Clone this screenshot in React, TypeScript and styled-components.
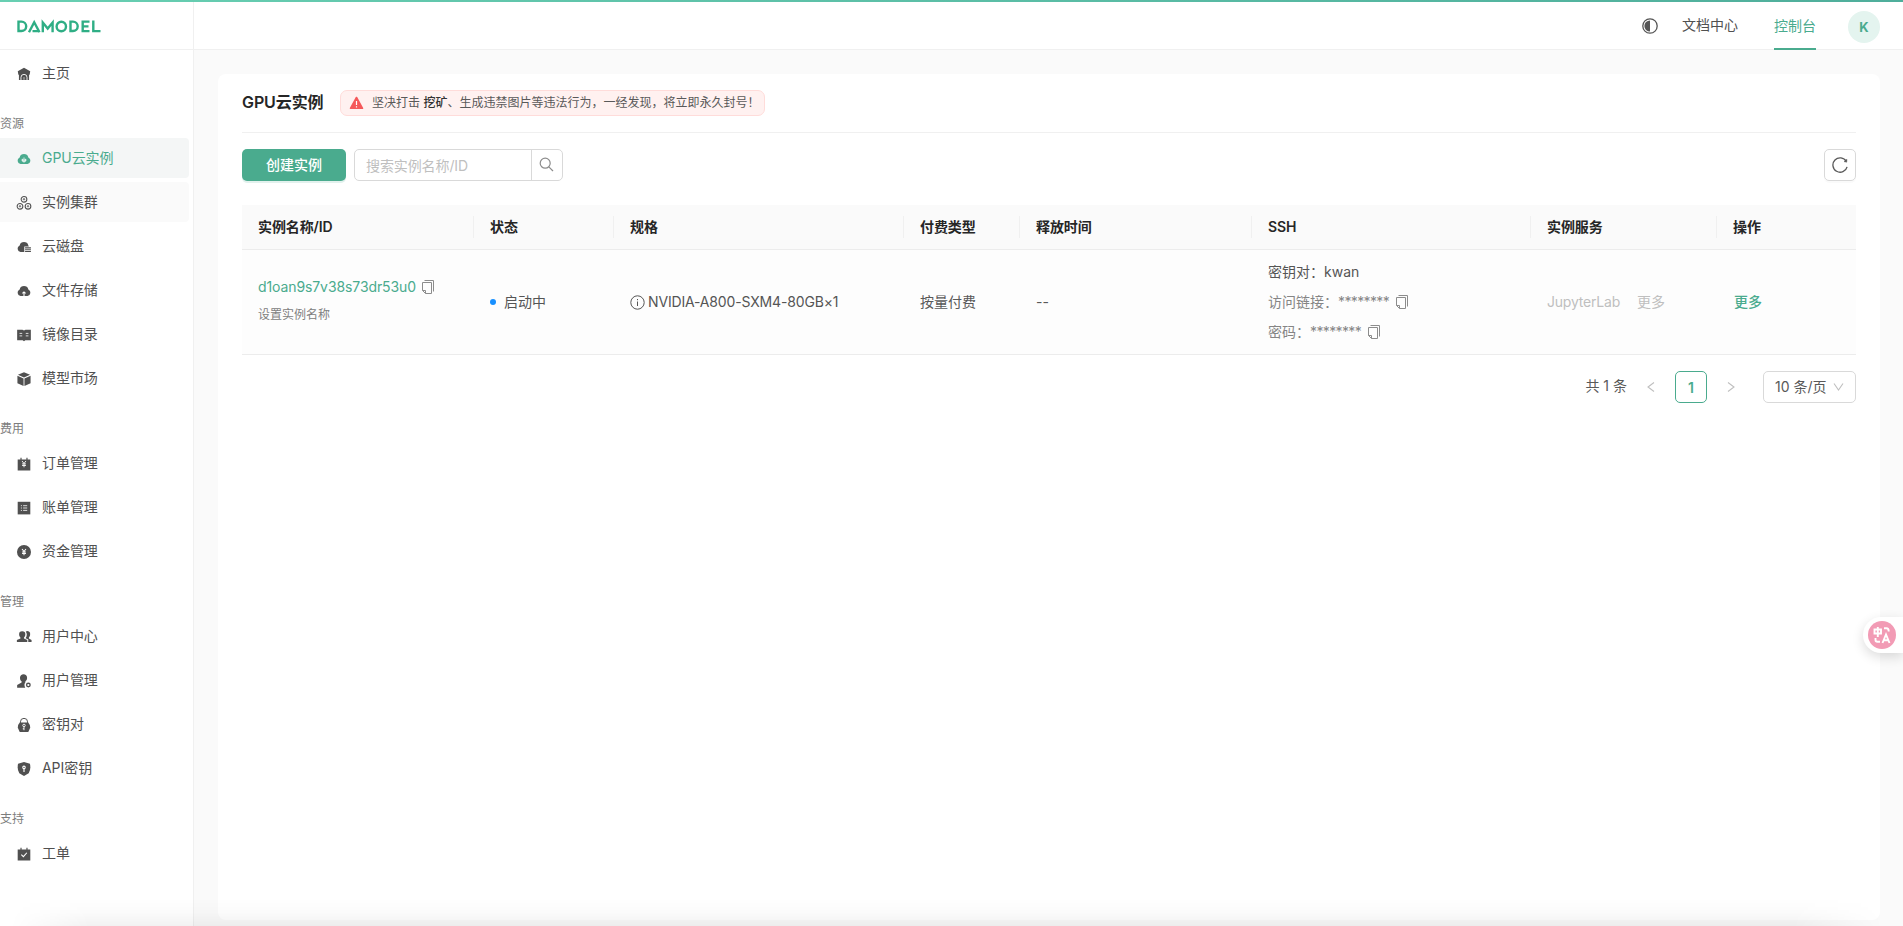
import React from "react";
import styled, { createGlobalStyle } from "styled-components";

const GREEN = "#4aab8e";
const LINE = "#f0f0f0";

const Global = createGlobalStyle`
  *, *::before, *::after { box-sizing: border-box; }
  body {
    margin: 0;
    overflow: hidden;
    background: #fafafa;
    color: #595959;
    font: 14px/22px Inter, "Noto Sans CJK SC", sans-serif;
  }
  svg { display: block; flex: none; }
`;

const Page = styled.div`
  position: relative;
  height: 926px;
  display: flex;
  flex-direction: column;
`;
const TopStrip = styled.div`
  height: 2px;
  flex: none;
  background: linear-gradient(90deg, #68cfb2, #4fae9b);
`;
const Body = styled.div`
  flex: 1;
  display: flex;
  min-height: 0;
`;
const Sidebar = styled.aside`
  width: 194px;
  flex: none;
  background: #fff;
  border-right: 1px solid ${LINE};
`;
const Brand = styled.div`
  height: 48px;
  padding: 17px 0 0 17px;
  border-bottom: 1px solid ${LINE};
`;
const Menu = styled.nav`
  padding-top: 3px;
`;
const Group = styled.div`
  display: flex;
  flex-direction: column;
  gap: 4px;
`;
const GroupLabel = styled.div`
  height: 41px;
  padding-top: 21px;
  font-size: 12px;
  line-height: 20px;
  color: #7d7d7d;
`;
const MenuItem = styled.a<{ $state?: "active" | "hover" }>`
  width: 189px;
  height: 40px;
  padding-left: 16px;
  display: flex;
  align-items: center;
  gap: 10px;
  border-radius: 0 4px 4px 0;
  color: ${(p) => (p.$state === "active" ? GREEN : "#505050")};
  background: ${(p) =>
    p.$state === "active" ? "#f4f6f6" : p.$state === "hover" ? "#fafafa" : "transparent"};
  svg { margin-top: 2px; color: ${(p) => (p.$state === "active" ? GREEN : "#505050")}; }
  span { margin-top: -1px; letter-spacing: -0.05px; }
`;
const Main = styled.div`
  flex: 1;
  display: flex;
  flex-direction: column;
`;
const Header = styled.header`
  height: 48px;
  flex: none;
  background: #fff;
  border-bottom: 1px solid ${LINE};
  display: flex;
  justify-content: flex-end;
  padding-right: 23px;
`;
const HeaderIcon = styled.div`
  margin: 16px 24px 0 0;
  color: #555;
`;
const HeaderLink = styled.a<{ $active?: boolean }>`
  height: 48px;
  padding-top: ${(p) => (p.$active ? "13px" : "12px")};
  margin-right: ${(p) => (p.$active ? "32px" : "36px")};
  color: ${(p) => (p.$active ? GREEN : "#505050")};
  border-bottom: 2px solid ${(p) => (p.$active ? GREEN : "transparent")};
`;
const Avatar = styled.div`
  width: 32px;
  height: 32px;
  margin-top: 9px;
  border-radius: 50%;
  background: #e4f4ef;
  color: ${GREEN};
  font-size: 13px;
  font-weight: 700;
  line-height: 32px;
  text-align: center;
`;
const Card = styled.main`
  flex: 1;
  margin: 24px 23px 6px 24px;
  padding: 0 24px;
  border-radius: 8px;
  background: #fff;
`;
const TitleRow = styled.div`
  height: 59px;
  display: flex;
  align-items: center;
  gap: 16px;
  padding-bottom: 1px;
  border-bottom: 1px solid ${LINE};
`;
const Title = styled.h1`
  margin: -2px 0 0;
  width: 82px;
  white-space: nowrap;
  font-size: 16px;
  line-height: 24px;
  font-weight: 600;
  letter-spacing: -0.1px;
  color: #262626;
`;
const Notice = styled.div`
  height: 26px;
  width: 425px;
  padding-left: 8px;
  display: flex;
  align-items: center;
  gap: 8px;
  border: 1px solid #ffdcda;
  border-radius: 7px;
  background: #fff1f0;
  font-size: 12px;
  white-space: nowrap;
  b { font-weight: 500; color: #333; }
`;
const Toolbar = styled.div`
  display: flex;
  margin: 16px 0 24px;
  gap: 8px;
`;
const Primary = styled.button`
  width: 104px;
  height: 32px;
  border: 0;
  padding: 0;
  border-radius: 5px;
  background: ${GREEN};
  box-shadow: 0 2px 0 rgba(74, 171, 142, 0.16);
  color: #fff;
  font: inherit;
  font-weight: 500;
`;
const Search = styled.div`
  width: 209px;
  height: 32px;
  display: flex;
  border: 1px solid #d9d9d9;
  border-radius: 5px;
  color: #bfbfbf;
`;
const SearchField = styled.div`
  flex: 1;
  padding: 5px 11px;
  line-height: 22px;
  letter-spacing: -0.1px;
`;
const SearchButton = styled.div`
  width: 31px;
  padding: 0 2px 1px 0;
  display: flex;
  align-items: center;
  justify-content: center;
  border-left: 1px solid #d9d9d9;
  color: #8c8c8c;
`;
const Refresh = styled.div`
  width: 32px;
  height: 32px;
  margin-left: auto;
  display: flex;
  align-items: center;
  justify-content: center;
  border: 1px solid #d9d9d9;
  border-radius: 5px;
  box-shadow: 0 2px 0 rgba(0, 0, 0, 0.02);
`;
const Columns = styled.div`
  display: grid;
  grid-template-columns: 232px 140px 290px 116px 232px 279px 186px 139px;
  align-items: center;
  border-bottom: 1px solid #ececec;
`;
const HeadRow = styled(Columns)`
  height: 45px;
  background: #fafafa;
  font-weight: 600;
  letter-spacing: -0.1px;
  color: #262626;
`;
const HeadCell = styled.div`
  height: 22px;
  padding-left: 16px;
  border-right: 1px solid ${LINE};
  &:last-child { border-right: 0; }
`;
const DataRow = styled(Columns)`
  height: 105px;
  background: #fdfdfd;
`;
const Cell = styled.div`
  padding-left: 16px;
  white-space: nowrap;
`;
const Inline = styled.div<{ $gap?: number; $muted?: boolean }>`
  display: flex;
  align-items: center;
  gap: ${(p) => p.$gap ?? 6}px;
  color: ${(p) => (p.$muted ? "#858585" : "#555")};
`;
const InstanceId = styled.a`
  color: ${GREEN};
  letter-spacing: -0.1px;
`;
const Spec = styled.span`
  letter-spacing: -0.16px;
`;
const Mask = styled.span`
  letter-spacing: -0.62px;
`;
const Rename = styled.div`
  margin: 6px 0 3px;
  font-size: 12px;
  color: #808080;
`;
const Dot = styled.i`
  width: 6px;
  height: 6px;
  border-radius: 50%;
  background: #1890ff;
`;
const SshList = styled.div`
  display: flex;
  flex-direction: column;
  gap: 8px;
`;
const Disabled = styled.span`
  color: #bfbfbf;
  letter-spacing: -0.2px;
`;
const MoreLink = styled.a`
  color: ${GREEN};
  font-weight: 500;
  padding-left: 1px;
`;
const Pager = styled.div`
  margin-top: 16px;
  height: 32px;
  display: flex;
  justify-content: flex-end;
  align-items: center;
  color: #595959;
`;
const Total = styled.span`
  margin: -2px 8px 0 0;
`;
const PageArrow = styled.span`
  width: 32px;
  display: flex;
  justify-content: center;
  color: #bfbfbf;
`;
const PageNumber = styled.span`
  width: 32px;
  height: 32px;
  margin: 0 8px;
  border: 1px solid ${GREEN};
  border-radius: 5px;
  color: ${GREEN};
  font-weight: 600;
  line-height: 31px;
  text-align: center;
`;
const SizeSelect = styled.div`
  width: 93px;
  height: 32px;
  margin-left: 16px;
  padding: 0 11px;
  display: flex;
  align-items: center;
  justify-content: space-between;
  border: 1px solid #d9d9d9;
  border-radius: 5px;
  white-space: nowrap;
  svg { color: #bfbfbf; }
`;
const Translate = styled.div`
  position: absolute;
  right: 0;
  top: 617px;
  width: 40px;
  height: 36px;
  padding: 4px 0 0 5px;
  border-radius: 18px 0 0 18px;
  background: #fff;
  box-shadow: 0 4px 12px rgba(0, 0, 0, 0.14);
`;
const BottomShade = styled.div`
  position: absolute;
  left: 0;
  right: 0;
  bottom: 0;
  height: 28px;
  background: linear-gradient(rgba(0, 0, 0, 0), rgba(0, 0, 0, 0.015) 50%, rgba(0, 0, 0, 0.05));
  mask-image: linear-gradient(90deg, transparent 10px, #000 90px, #000 calc(100% - 110px), transparent calc(100% - 20px));
`;

const stroke = { fill: "none", stroke: "currentColor" } as const;
const cut = { fill: "none", stroke: "#fff" } as const;
const CLOUD = "M4 13.6A3.9 3.9 0 0 1 3.1 6.2 5.1 5.1 0 0 1 12.9 6.2 3.9 3.9 0 0 1 12 13.6Z";
const YEN = "M5.8 4.6 8 7.4 10.200 4.600M8 7.400V11.700M5.800 7.900H10.200M5.800 9.700H10.200";

const glyphs: Record<string, React.ReactNode> = {
  home: (
    <>
      <path d="M8 .9 15 5 14.400 8.700 13.700 9V14.800H2.300V9L1.600 8.700 1 5Z" />
      <path {...cut} strokeWidth="1" d="M4.600 15V11.800a3.400 3.400 0 0 1 6.800 0V15" />
      <path {...cut} strokeWidth=".7" d="M8 11.500v3" />
    </>
  ),
  gpu: (
    <>
      <path d={CLOUD} />
      <path {...cut} strokeWidth=".9" d="M8 6.300v5.800M6.200 7.800v2.800h3.600V7.800M5.200 9.200h5.600" />
    </>
  ),
  cluster: (
    <g {...stroke} strokeWidth="1.200">
      <circle cx="8" cy="3.800" r="3.200" /><circle cx="3.500" cy="11.700" r="3.200" /><circle cx="12.500" cy="11.700" r="3.200" />
      <g strokeWidth="1"><circle cx="8" cy="3.800" r=".8" /><circle cx="3.500" cy="11.700" r=".8" /><circle cx="12.500" cy="11.700" r=".8" /></g>
    </g>
  ),
  disk: (
    <>
      <path d="M8.300 13.600H4A3.900 3.900 0 0 1 3.100 6.200 5.100 5.100 0 0 1 12.900 6.200L13.500 7.400H8.300Z" />
      <path d="M9.200 8.400H15.800V9.700H9.200ZM9.200 10.500H15.800V11.700H9.200ZM9.200 12.500H15.800V13.700H9.200Z" />
    </>
  ),
  file: (
    <>
      <path d={CLOUD} />
      <path {...cut} strokeWidth="1.200" d="M8 13.600V9.200M6.200 10.800 8 9 9.800 10.800" />
    </>
  ),
  book: (
    <>
      <path d="M.3 2.200H6Q7.500 2.200 8 3.200 8.500 2.200 10 2.200h5.700v11.700H9.500L8 14.900 6.500 13.900H.3Z" />
      <path {...cut} strokeWidth=".9" d="M3 6.200h3M3 9h3M10 6.200h3M10 9h3" />
    </>
  ),
  cube: (
    <>
      <path d="M8 .3 14.800 3.300 8 6.300 1.200 3.300Z" />
      <path d="M.6 4.400 7.500 7.500V15.900L.6 12.700ZM15.400 4.400 8.500 7.500V15.900L15.400 12.700Z" />
    </>
  ),
  order: (
    <>
      <path d="M.9 2.800H4V1H5.300V2.800H10.700V1H12V2.800h3.100v12.500H.9Z" />
      <path {...cut} strokeWidth="1" d={YEN} />
    </>
  ),
  bill: (
    <>
      <path d="M.9 1H15.100V15.200H.9Z" />
      <path {...cut} strokeWidth=".9" d="M4.500 5.400h1.200M7 5.400h4.600M4.500 8h1.200M7 8h4.600M4.500 10.700h1.200M7 10.700h4.600" />
    </>
  ),
  money: (
    <>
      <circle cx="8" cy="8" r="7.900" />
      <path {...cut} strokeWidth="1.200" d={YEN} />
    </>
  ),
  users: (
    <>
      <path d="M6 1.600a3.500 3.500 0 0 1 3.500 3.700c0 1.700-.8 2.700-1.500 3.400v1.100l3.700 1.700v2H0v-2L4 9.800V8.700C3.300 8 2.500 7 2.500 5.300A3.500 3.500 0 0 1 6 1.600Z" />
      <path d="M10 1.900a3.200 3.200 0 0 1 4.900 3.400c0 1.700-.8 2.600-1.400 3.200v1.200l3 1.700V13.500h-3.700v-2.600L9.800 9.400c1.800-2.400 1.800-5 .2-7.500Z" />
    </>
  ),
  user: (
    <>
      <path d="M7.500.3a4 4 0 0 1 4 4.200c0 2-1 3-1.900 3.900v1c-1.400 1.500-1.400 3.900-.2 6.100H.3v-2.900L5.300 9.600V8.400C4.500 7.600 3.500 6.500 3.500 4.500A4 4 0 0 1 7.500.3Z" />
      <circle {...stroke} cx="12.900" cy="12.500" r="2" strokeWidth="1.500" />
    </>
  ),
  lock: (
    <>
      <path {...stroke} strokeWidth="1.100" d="M4 6V4.500a4 4 0 0 1 8 0V6" />
      <path d="M3.200 5.200H12.800Q15.300 8 15 11L12.800 15.900H3.200L1 11Q.7 8 3.200 5.200Z" />
      <circle {...cut} cx="8" cy="8.500" r="1.400" /><path {...cut} d="M8 9.900v4M8 12.300H6.600" />
    </>
  ),
  shield: (
    <>
      <path d="M8 .1 14.700 2.200Q16 8.700 13.300 12.700L8 15.900 2.700 12.700Q0 8.700 1.300 2.200Z" />
      <circle {...cut} cx="8" cy="6.200" r="1.400" strokeWidth="1.200" /><path {...cut} strokeWidth="1.300" d="M8 7.500V11.500" />
    </>
  ),
  ticket: (
    <>
      <path d="M.9 2.800H4V1H5.300V2.800H10.700V1H12V2.800h3.100v12.500H.9Z" />
      <path {...cut} strokeWidth="1.200" d="M5 8.700 7.300 11 11.200 6.600" />
    </>
  ),
};

const Glyph = ({ name }: { name: string }) => (
  <svg width="16" height="16" viewBox="-1 -1 18 18" fill="currentColor">{glyphs[name]}</svg>
);

const Logo = () => (
  <svg width="84" height="14" viewBox="0 0 84 14" fill="none" stroke="#2fae85" strokeWidth="2.400">
    <path d="M1.500 2.600H4.500a4.200 4.200 0 0 1 0 9.400H1.500Z" />
    <path d="M12 13.200 17.200 3.300 22.500 13.200M15.500 12.100H22" />
    <path d="M25.800 13.200V3.600L30.700 9.600 35.600 3.600V13.200" />
    <circle cx="44.300" cy="7.500" r="4.700" />
    <path d="M53.500 2.600H56a4.200 4.200 0 0 1 0 9.400H53.500Z" />
    <path d="M72.500 2.600H65.700V12.100H72.500M65.500 7.400H71.500M76.300 1.400V12.100H83.500" />
  </svg>
);

const CopyIcon = () => (
  <svg width="14" height="16" viewBox="0 0 14 16" fill="none" stroke="#8c8c8c">
    <path d="M3.500 1.500H12.500V12.500" />
    <path d="M1.500 3.500H10.500V14.500H4.500L1.500 11.500ZM4.500 14.500V11.500H1.500" />
  </svg>
);

const Chevron = ({ d, w = 10 }: { d: string; w?: number }) => (
  <svg width={w} height="12" viewBox={`0 0 ${w} 12`} {...stroke} strokeWidth="1.100"><path d={d} /></svg>
);

type Entry = { icon: string; label: string; state?: "active" | "hover" };
const menu: { title?: string; items: Entry[] }[] = [
  { items: [{ icon: "home", label: "主页" }] },
  {
    title: "资源",
    items: [
      { icon: "gpu", label: "GPU云实例", state: "active" },
      { icon: "cluster", label: "实例集群", state: "hover" },
      { icon: "disk", label: "云磁盘" },
      { icon: "file", label: "文件存储" },
      { icon: "book", label: "镜像目录" },
      { icon: "cube", label: "模型市场" },
    ],
  },
  {
    title: "费用",
    items: [
      { icon: "order", label: "订单管理" },
      { icon: "bill", label: "账单管理" },
      { icon: "money", label: "资金管理" },
    ],
  },
  {
    title: "管理",
    items: [
      { icon: "users", label: "用户中心" },
      { icon: "user", label: "用户管理" },
      { icon: "lock", label: "密钥对" },
      { icon: "shield", label: "API密钥" },
    ],
  },
  { title: "支持", items: [{ icon: "ticket", label: "工单" }] },
];

const heads = ["实例名称/ID", "状态", "规格", "付费类型", "释放时间", "SSH", "实例服务", "操作"];

export default function App() {
  return (
    <Page>
      <Global />
      <TopStrip />
      <Body>
        <Sidebar>
          <Brand><Logo /></Brand>
          <Menu>
            {menu.map((g, i) => (
              <Group key={i}>
                {g.title && <GroupLabel>{g.title}</GroupLabel>}
                {g.items.map((it) => (
                  <MenuItem key={it.label} $state={it.state}>
                    <Glyph name={it.icon} />
                    <span>{it.label}</span>
                  </MenuItem>
                ))}
              </Group>
            ))}
          </Menu>
        </Sidebar>
        <Main>
          <Header>
            <HeaderIcon>
              <svg width="16" height="16" viewBox="0 0 16 16">
                <circle {...stroke} cx="8" cy="8" r="7.200" strokeWidth="1.300" />
                <path fill="currentColor" d="M8 2.400A5.600 5.600 0 0 0 8 13.600Z" />
              </svg>
            </HeaderIcon>
            <HeaderLink>文档中心</HeaderLink>
            <HeaderLink $active>控制台</HeaderLink>
            <Avatar>K</Avatar>
          </Header>
          <Card>
            <TitleRow>
              <Title>GPU云实例</Title>
              <Notice>
                <svg width="15" height="14" viewBox="0 0 15 14">
                  <path d="M7.500 1.500 13.500 12.300H1.500Z" fill="#f5585a" stroke="#f5585a" strokeWidth="1.600" strokeLinejoin="round" />
                  <path d="M7.500 5v4M7.500 10.200v1.300" stroke="#fff" strokeWidth="1.200" />
                </svg>
                <span>坚决打击 <b>挖矿</b>、生成违禁图片等违法行为，一经发现，将立即永久封号！</span>
              </Notice>
            </TitleRow>
            <Toolbar>
              <Primary>创建实例</Primary>
              <Search>
                <SearchField>搜索实例名称/ID</SearchField>
                <SearchButton>
                  <svg width="15" height="15" viewBox="0 0 15 15" {...stroke} strokeWidth="1.200">
                    <circle cx="6.200" cy="6.200" r="5" /><path d="M9.800 9.800 14 14" />
                  </svg>
                </SearchButton>
              </Search>
              <Refresh>
                <svg width="16" height="16" viewBox="0 0 16 16" {...stroke} strokeWidth="1.300">
                  <path d="M14.300 4.300A7.200 7.200 0 1 0 15.100 9.800" />
                  <path d="M14.900 2.300 14.700 5.200 12 4.600Z" fill="currentColor" strokeWidth=".5" />
                </svg>
              </Refresh>
            </Toolbar>
            <HeadRow>
              {heads.map((h) => <HeadCell key={h}>{h}</HeadCell>)}
            </HeadRow>
            <DataRow>
              <Cell>
                <Inline $gap={5}><InstanceId>d1oan9s7v38s73dr53u0</InstanceId><CopyIcon /></Inline>
                <Rename>设置实例名称</Rename>
              </Cell>
              <Cell><Inline $gap={8}><Dot />启动中</Inline></Cell>
              <Cell>
                <Inline $gap={3}>
                  <svg width="15" height="15" viewBox="0 0 15 15" {...stroke}>
                    <circle cx="7.500" cy="7.500" r="6.700" /><path d="M7.500 6.500v4.500M7.500 4v1.200" />
                  </svg>
                  <Spec>NVIDIA-A800-SXM4-80GB×1</Spec>
                </Inline>
              </Cell>
              <Cell>按量付费</Cell>
              <Cell>--</Cell>
              <Cell>
                <SshList>
                  <Inline>密钥对：kwan</Inline>
                  <Inline $muted><span>访问链接：<Mask>********</Mask></span><CopyIcon /></Inline>
                  <Inline $muted><span>密码：<Mask>********</Mask></span><CopyIcon /></Inline>
                </SshList>
              </Cell>
              <Cell><Inline $gap={17}><Disabled>JupyterLab</Disabled><Disabled>更多</Disabled></Inline></Cell>
              <Cell><MoreLink>更多</MoreLink></Cell>
            </DataRow>
            <Pager>
              <Total>共 1 条</Total>
              <PageArrow><Chevron d="M8 1.500 2 6 8 10.500" /></PageArrow>
              <PageNumber>1</PageNumber>
              <PageArrow><Chevron d="M2 1.500 8 6 2 10.500" /></PageArrow>
              <SizeSelect>10 条/页<Chevron w={11} d="M1 2.500 5.500 9 10 2.500" /></SizeSelect>
            </Pager>
          </Card>
        </Main>
      </Body>
      <BottomShade />
      <Translate>
        <svg width="28" height="28" viewBox="0 0 28 28" fill="none" stroke="#fff" strokeWidth="1.900">
          <circle cx="14" cy="14" r="14" fill="#f29bb5" stroke="none" />
          <path d="M6.500 8.500H13V12.500H6.500ZM9.800 6V16M16 7.300H18.500Q20.700 7.300 20.700 10.500M7.500 17V19Q7.500 20.700 9.500 20.700H12M14.500 22 18 13.500 21.500 22M15.800 19.300H20.200" />
        </svg>
      </Translate>
    </Page>
  );
}
